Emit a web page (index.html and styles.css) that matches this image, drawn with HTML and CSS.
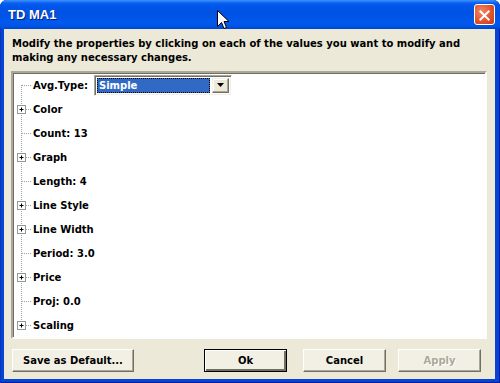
FILE: index.html
```html
<!DOCTYPE html>
<html>
<head>
<meta charset="utf-8">
<link rel="stylesheet" href="styles.css">
</head>
<body>
<div class="window">
  <div class="titlebar">
    <span class="title">TD MA1</span>
    <span class="close"><svg width="21" height="21" viewBox="0 0 21 21"><path d="M6 6 L15 15 M15 6 L6 15" stroke="#fff" stroke-width="2.2" stroke-linecap="square"/></svg></span>
  </div>
  <div class="body">
    <p class="desc">Modify the properties by clicking on each of the values you want to modify and making any necessary changes.</p>
    <div class="tree">
      <div class="row first">
        <svg class="gutter" width="20" height="24"><path d="M8.5 12 V24 M9 12.5 H18" class="dot"/></svg>
        <span class="label">Avg.Type:</span>
        <span class="select">
          <span class="select-value">Simple</span>
          <span class="select-btn"><svg width="7" height="4"><path d="M0 0 H7 L3.5 4 Z" fill="#000"/></svg></span>
        </span>
      </div>
      <div class="row">
        <svg class="gutter" width="20" height="24"><path d="M8.5 0 V24 M13 12.5 H18" class="dot"/><rect x="4.5" y="8.5" width="8" height="8" class="box"/><path d="M6.5 12.5 H10.5 M8.5 10.5 V14.5" class="plus"/></svg>
        <span class="label">Color</span>
      </div>
      <div class="row">
        <svg class="gutter" width="20" height="24"><path d="M8.5 0 V24 M9 12.5 H18" class="dot"/></svg>
        <span class="label">Count: 13</span>
      </div>
      <div class="row">
        <svg class="gutter" width="20" height="24"><path d="M8.5 0 V24 M13 12.5 H18" class="dot"/><rect x="4.5" y="8.5" width="8" height="8" class="box"/><path d="M6.5 12.5 H10.5 M8.5 10.5 V14.5" class="plus"/></svg>
        <span class="label">Graph</span>
      </div>
      <div class="row">
        <svg class="gutter" width="20" height="24"><path d="M8.5 0 V24 M9 12.5 H18" class="dot"/></svg>
        <span class="label">Length: 4</span>
      </div>
      <div class="row">
        <svg class="gutter" width="20" height="24"><path d="M8.5 0 V24 M13 12.5 H18" class="dot"/><rect x="4.5" y="8.5" width="8" height="8" class="box"/><path d="M6.5 12.5 H10.5 M8.5 10.5 V14.5" class="plus"/></svg>
        <span class="label">Line Style</span>
      </div>
      <div class="row">
        <svg class="gutter" width="20" height="24"><path d="M8.5 0 V24 M13 12.5 H18" class="dot"/><rect x="4.5" y="8.5" width="8" height="8" class="box"/><path d="M6.5 12.5 H10.5 M8.5 10.5 V14.5" class="plus"/></svg>
        <span class="label">Line Width</span>
      </div>
      <div class="row">
        <svg class="gutter" width="20" height="24"><path d="M8.5 0 V24 M9 12.5 H18" class="dot"/></svg>
        <span class="label">Period: 3.0</span>
      </div>
      <div class="row">
        <svg class="gutter" width="20" height="24"><path d="M8.5 0 V24 M13 12.5 H18" class="dot"/><rect x="4.5" y="8.5" width="8" height="8" class="box"/><path d="M6.5 12.5 H10.5 M8.5 10.5 V14.5" class="plus"/></svg>
        <span class="label">Price</span>
      </div>
      <div class="row">
        <svg class="gutter" width="20" height="24"><path d="M8.5 0 V24 M9 12.5 H18" class="dot"/></svg>
        <span class="label">Proj: 0.0</span>
      </div>
      <div class="row">
        <svg class="gutter" width="20" height="24"><path d="M8.5 0 V8 M13 12.5 H18" class="dot"/><rect x="4.5" y="8.5" width="8" height="8" class="box"/><path d="M6.5 12.5 H10.5 M8.5 10.5 V14.5" class="plus"/></svg>
        <span class="label">Scaling</span>
      </div>
    </div>
    <div class="buttons">
      <button class="btn btn-save">Save as Default...</button>
      <span class="spacer"></span>
      <button class="btn btn-default">Ok</button>
      <button class="btn btn-cancel">Cancel</button>
      <button class="btn disabled">Apply</button>
    </div>
  </div>
</div>
<svg class="cursor" width="13" height="21" viewBox="0 0 13 21"><path d="M0.5 0.5 V16.5 L4.5 12.5 L7 18.5 L9.5 17.5 L7 11.5 H12 Z" fill="#fff" stroke="#000" stroke-width="1"/></svg>
</body>
</html>
```

FILE: styles.css
```css
* { box-sizing: border-box; }
html, body { margin: 0; padding: 0; }
body {
  width: 500px;
  height: 383px;
  overflow: hidden;
  font-family: "DejaVu Sans", Verdana, sans-serif;
  font-weight: bold;
  font-size: 10px;
  color: #000;
  position: relative;
  background: #fff;
}
.window {
  width: 500px;
  height: 383px;
  display: flex;
  flex-direction: column;
  background: #0843d6;
  border-radius: 7px 7px 0 0;
  padding: 0 5px 4px 4px;
  box-shadow: inset 1px 0 0 #0838b8, inset -1px 0 0 #001ea0, inset 0 -1px 0 #001ea0;
}
.titlebar {
  height: 29px;
  margin: 0 -5px 0 -4px;
  display: flex;
  align-items: center;
  padding: 0 5px 0 8px;
  border-radius: 7px 7px 0 0;
  background: linear-gradient(#3d95ff 0, #0a5ff0 3px, #0056ea 6px, #0052e2 45%, #0059ee 80%, #0053e0 92%, #0043cf 100%);
}
.title {
  flex: 1;
  color: #fff;
  font-family: "Liberation Sans", Arial, sans-serif;
  font-size: 13px;
  font-weight: bold;
  text-shadow: 1px 1px 0 #0a1e7a;
}
.close {
  width: 21px;
  height: 21px;
  border: 1px solid #fff;
  border-radius: 3px;
  background: radial-gradient(circle at 35% 35%, #f08a68 0, #e2542c 55%, #c73a15 100%);
  display: flex;
}
.body {
  flex: 1;
  background: #ece9d8;
  display: flex;
  flex-direction: column;
  padding: 0 8px 7px 7px;
}
.desc {
  margin: 8px 0 0 1px;
  line-height: 13.5px;
  height: 34px;
}
.tree {
  height: 268px;
  border: 2px solid;
  border-color: #aca899 #fff #fff #aca899;
  box-shadow: inset 1px 1px 0 #716f64;
  background: #fff;
  overflow: hidden;
}
.row {
  height: 24px;
  display: flex;
  align-items: center;
}
.gutter { flex: none; display: block; }
.dot { stroke: #a0a0a0; stroke-width: 1; stroke-dasharray: 1 1; fill: none; }
.box { fill: #fff; stroke: #919b9c; stroke-width: 1; }
.plus { stroke: #000; stroke-width: 1; fill: none; }
.label { white-space: nowrap; }
.select {
  margin-left: 6px;
  width: 138px;
  height: 21px;
  display: flex;
  align-items: stretch;
  border: 1px solid;
  border-color: #aca899 #fff #fff #aca899;
  box-shadow: inset 1px 1px 0 #716f64, inset -1px -1px 0 #f1efe2;
  background: #fff;
  padding: 2px;
}
.select-value {
  flex: 1;
  background: #316ac5;
  color: #fff;
  outline: 1px dotted #000;
  outline-offset: -1px;
  padding-left: 2px;
  line-height: 15px;
  margin-right: 2px;
}
.select-btn {
  width: 17px;
  background: #ece9d8;
  border: 1px solid;
  border-color: #f1efe2 #716f64 #716f64 #f1efe2;
  box-shadow: inset -1px -1px 0 #aca899, inset 1px 1px 0 #fff;
  display: flex;
  align-items: center;
  justify-content: center;
}
.select-btn svg { display: block; }
.buttons {
  margin-top: 10px;
  display: flex;
  align-items: center;
  padding-left: 1px;
}
.spacer { flex: 1; }
.btn {
  font-family: "DejaVu Sans", Verdana, sans-serif;
  font-weight: bold;
  font-size: 10px;
  height: 23px;
  width: 83px;
  margin: 0;
  padding: 0;
  background: #f2f0e5;
  color: #000;
  border: 1px solid;
  border-color: #fff #716f64 #716f64 #fff;
  box-shadow: inset -1px -1px 0 #aca899;
}
.btn-save { width: 122px; }
.btn-default {
  border: 1px solid #000;
  box-shadow: inset 1px 1px 0 #fff, inset -2px -2px 0 #716f64;
}
.btn-cancel { margin-left: 16px; }
.btn.disabled { color: #aca899; text-shadow: 1px 1px 0 #fff; margin-left: 12px; margin-right: 6px; }
.cursor { position: absolute; left: 217px; top: 10px; }
```
